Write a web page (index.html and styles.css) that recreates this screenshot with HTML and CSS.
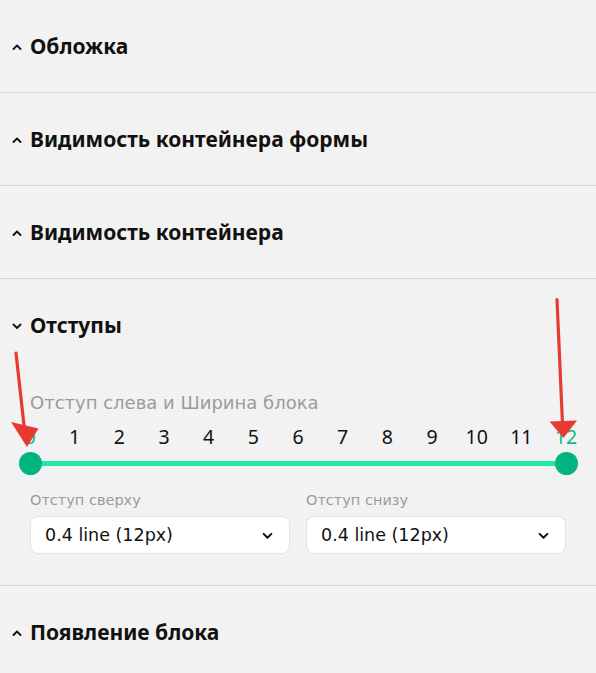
FILE: index.html
```html
<!DOCTYPE html>
<html lang="ru">
<head>
<meta charset="utf-8">
<title>Настройки блока</title>
<link rel="stylesheet" href="styles.css">
</head>
<body>
<div class="panel">
  <section class="sect">
    <div class="sect-head">
      <svg class="caret" viewBox="0 0 10 6"><path d="M1.5 5 L5 1.5 L8.5 5"/></svg>
      <span>Обложка</span>
    </div>
  </section>
  <section class="sect">
    <div class="sect-head">
      <svg class="caret" viewBox="0 0 10 6"><path d="M1.5 5 L5 1.5 L8.5 5"/></svg>
      <span>Видимость контейнера формы</span>
    </div>
  </section>
  <section class="sect">
    <div class="sect-head">
      <svg class="caret" viewBox="0 0 10 6"><path d="M1.5 5 L5 1.5 L8.5 5"/></svg>
      <span>Видимость контейнера</span>
    </div>
  </section>
  <section class="sect sect-open">
    <div class="sect-head">
      <svg class="caret" viewBox="0 0 10 6"><path d="M1.5 1.5 L5 5 L8.5 1.5"/></svg>
      <span>Отступы</span>
    </div>
    <div class="sect-body">
      <div class="field-label">Отступ слева и Ширина блока</div>
      <div class="slider">
        <div class="ticks">
          <span class="tick on">0</span><span class="tick">1</span><span class="tick">2</span><span class="tick">3</span><span class="tick">4</span><span class="tick">5</span><span class="tick">6</span><span class="tick">7</span><span class="tick">8</span><span class="tick">9</span><span class="tick">10</span><span class="tick">11</span><span class="tick on">12</span>
        </div>
        <div class="track">
          <span class="thumb thumb-l"></span>
          <span class="thumb thumb-r"></span>
        </div>
      </div>
      <div class="selects">
        <div class="sel-field">
          <div class="sel-label">Отступ сверху</div>
          <div class="select">
            <span>0.4 line (12px)</span>
            <svg class="sel-caret" viewBox="0 0 10 6"><path d="M1.5 1.5 L5 5 L8.5 1.5"/></svg>
          </div>
        </div>
        <div class="sel-field">
          <div class="sel-label">Отступ снизу</div>
          <div class="select">
            <span>0.4 line (12px)</span>
            <svg class="sel-caret" viewBox="0 0 10 6"><path d="M1.5 1.5 L5 5 L8.5 1.5"/></svg>
          </div>
        </div>
      </div>
    </div>
  </section>
  <section class="sect">
    <div class="sect-head">
      <svg class="caret" viewBox="0 0 10 6"><path d="M1.5 5 L5 1.5 L8.5 5"/></svg>
      <span>Появление блока</span>
    </div>
  </section>
</div>
<svg class="annot" viewBox="0 0 596 673" width="596" height="673">
  <g stroke="#e53b33" stroke-width="3.2" stroke-linecap="round" fill="none">
    <line x1="16" y1="353" x2="24.5" y2="430"/>
    <line x1="557" y1="299.5" x2="562.5" y2="424"/>
  </g>
  <g fill="#e53b33">
    <polygon points="11,422 38.5,428.5 27,447"/>
    <polygon points="549.5,421.5 577,420.5 563.5,438"/>
  </g>
</svg>
</body>
</html>
```

FILE: styles.css
```css
html, body {
  margin: 0;
  padding: 0;
  background: #f2f2f2;
  overflow: hidden;
}
body {
  font-family: "DejaVu Sans", "Noto Sans", sans-serif;
  color: #111;
  position: relative;
  width: 596px;
  height: 673px;
}
.panel {
  display: flex;
  flex-direction: column;
}
.sect {
  border-bottom: 1px solid #d4d4d4;
}
.sect-head {
  height: 92px;
  display: flex;
  align-items: center;
  padding-left: 12px;
  gap: 8px;
  font-family: "Noto Sans", "Open Sans", sans-serif;
  font-size: 21px;
  font-weight: 700;
  letter-spacing: 0;
}
.caret {
  width: 10px;
  height: 6px;
  fill: none;
  stroke: #111;
  stroke-width: 1.8;
  stroke-linecap: round;
  stroke-linejoin: round;
  margin-top: 1px;
}
.sect-open .sect-body {
  padding: 20px 30px 31px;
}
.field-label {
  font-size: 18px;
  line-height: 24px;
  color: #9b9b9b;
}
.slider {
  margin-top: 10px;
}
.ticks {
  display: grid;
  grid-template-columns: repeat(13, 1fr);
  margin: 0 -22.33px;
  font-family: "Noto Sans", "Open Sans", sans-serif;
  font-size: 19.5px;
  line-height: 24px;
  color: #111;
}
.tick {
  text-align: center;
}
.tick.on {
  color: #12b886;
}
.track {
  position: relative;
  height: 5px;
  border-radius: 3px;
  background: #1deaa6;
  margin-top: 12px;
}
.thumb {
  position: absolute;
  top: -9px;
  width: 23px;
  height: 23px;
  border-radius: 50%;
  background: #00b580;
}
.thumb-l { left: -11.5px; }
.thumb-r { right: -11.5px; }
.selects {
  display: grid;
  grid-template-columns: 1fr 1fr;
  column-gap: 16px;
  margin-top: 24px;
}
.sel-label {
  font-size: 14.5px;
  line-height: 20px;
  color: #9b9b9b;
  margin-bottom: 6px;
}
.select {
  height: 36px;
  background: #fff;
  border: 1px solid #e2e2e2;
  border-radius: 8px;
  display: flex;
  align-items: center;
  justify-content: space-between;
  padding: 0 16px 0 14px;
  font-size: 17.5px;
  color: #111;
}
.sel-caret {
  width: 11px;
  height: 7px;
  fill: none;
  stroke: #111;
  stroke-width: 1.8;
  stroke-linecap: round;
  stroke-linejoin: round;
}
.annot {
  position: absolute;
  top: 0;
  left: 0;
  pointer-events: none;
}
```
